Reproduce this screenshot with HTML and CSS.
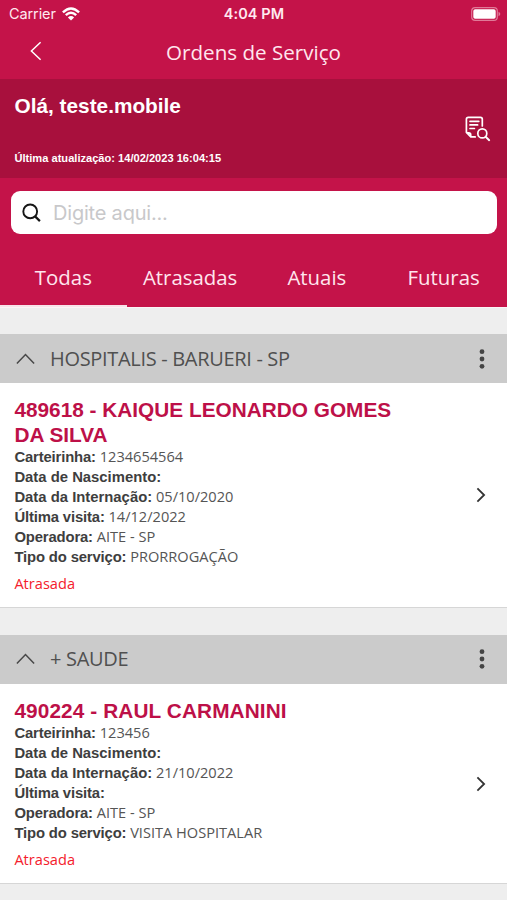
FILE: index.html
```html
<!DOCTYPE html>
<html lang="pt-BR">
<head>
<meta charset="utf-8">
<title>Ordens de Serviço</title>
<link rel="stylesheet" href="styles.css">
</head>
<body>
<div class="status">
  <div class="carrier"><span class="carrier-name">Carrier</span>
    <svg width="18" height="14" viewBox="0 0 18 14" fill="none" stroke="#fff" stroke-width="2.4"><path d="M.9 5.3Q9-2.5 17.1 5.3M3.8 8.2Q9 3.3 14.2 8.2"/><path d="M9 13.5 5.9 10.4Q9 7.7 12.1 10.4Z" fill="#fff" stroke="none"/></svg>
  </div>
  <span class="clock">4:04 PM</span>
  <svg class="battery" width="30" height="14" viewBox="0 0 30 14"><rect x=".7" y=".7" width="25.6" height="12.6" rx="3.4" fill="none" stroke="#e07a98" stroke-width="1.2"/><rect x="2.3" y="2.3" width="22.4" height="9.4" rx="1.8" fill="#fff"/><path d="M27.5 4.8Q29.3 5.6 29.3 7T27.5 9.2Z" fill="#e07a98"/></svg>
</div>
<header class="nav">
  <svg class="back" width="12" height="20" viewBox="0 0 12 20" fill="none" stroke="#fff" stroke-width="1.5"><path d="M10.6 1.2 1.4 10l9.2 8.8"/></svg>
  <h1>Ordens de Serviço</h1>
</header>
<section class="greeting">
  <div>
    <p class="hello">Olá, teste.mobile</p>
    <p class="updated">Última atualização: 14/02/2023 16:04:15</p>
  </div>
  <svg class="report" width="26" height="26" viewBox="0 0 26 26" fill="none" stroke="#fff" stroke-width="1.7" stroke-linecap="round" stroke-linejoin="round"><path d="M17.3 10V3.3Q17.3 1.4 15.4 1.4H3.3Q1.4 1.4 1.4 3.3V16.5L5.8 20.9H10.2M1.7 16.8H3.7Q5.7 16.8 5.7 18.8V20.7M5 5.3H13.8M5 8.9H12.6M5 12.5H9.4"/><circle cx="17.3" cy="17.4" r="4.5"/><path d="M20.6 20.7 24.2 24.2" stroke-width="1.9"/></svg>
</section>
<div class="search">
  <svg width="20" height="20" viewBox="0 0 20 20" fill="none" stroke="#161616" stroke-width="1.9"><circle cx="8.2" cy="8.4" r="6.9"/><path d="m13.1 13.4 4.8 4.7" stroke-width="2.2"/></svg>
  <span>Digite aqui...</span>
</div>
<nav class="tabs">
  <a class="tab active">Todas</a>
  <a class="tab">Atrasadas</a>
  <a class="tab">Atuais</a>
  <a class="tab">Futuras</a>
</nav>
<main>
  <section class="group">
    <div class="group-head">
      <svg width="19" height="12" viewBox="0 0 19 12" fill="none" stroke="#484848" stroke-width="1.5"><path d="m.9 10.5 8.6-9 8.6 9"/></svg>
      <h2>HOSPITALIS - BARUERI - SP</h2>
      <svg width="6" height="20" viewBox="0 0 6 20" fill="#444"><circle cx="3" cy="2.7" r="2.4"/><circle cx="3" cy="10" r="2.4"/><circle cx="3" cy="17.3" r="2.4"/></svg>
    </div>
    <article class="card">
      <div>
        <h3>489618 - KAIQUE LEONARDO GOMES<br>DA SILVA</h3>
        <p><b class="tight">Carteirinha:</b> 1234654564</p>
        <p><b>Data de Nascimento:</b></p>
        <p><b>Data da Internação:</b> 05/10/2020</p>
        <p><b class="tight">Última visita:</b> 14/12/2022</p>
        <p><b class="tight">Operadora:</b> AITE - SP</p>
        <p><b class="tight">Tipo do serviço:</b> PRORROGAÇÃO</p>
        <p class="late">Atrasada</p>
      </div>
      <svg width="10" height="16" viewBox="0 0 10 16" fill="none" stroke="#333" stroke-width="1.8"><path d="M1.4 1.4 8.1 8l-6.7 6.6"/></svg>
    </article>
  </section>
  <section class="group">
    <div class="group-head">
      <svg width="19" height="12" viewBox="0 0 19 12" fill="none" stroke="#484848" stroke-width="1.5"><path d="m.9 10.5 8.6-9 8.6 9"/></svg>
      <h2>+ SAUDE</h2>
      <svg width="6" height="20" viewBox="0 0 6 20" fill="#444"><circle cx="3" cy="2.7" r="2.4"/><circle cx="3" cy="10" r="2.4"/><circle cx="3" cy="17.3" r="2.4"/></svg>
    </div>
    <article class="card">
      <div>
        <h3 class="wide">490224 - RAUL CARMANINI</h3>
        <p><b class="tight">Carteirinha:</b> 123456</p>
        <p><b>Data de Nascimento:</b></p>
        <p><b>Data da Internação:</b> 21/10/2022</p>
        <p><b class="tight">Última visita:</b></p>
        <p><b class="tight">Operadora:</b> AITE - SP</p>
        <p><b class="tight">Tipo do serviço:</b> VISITA HOSPITALAR</p>
        <p class="late">Atrasada</p>
      </div>
      <svg width="10" height="16" viewBox="0 0 10 16" fill="none" stroke="#333" stroke-width="1.8"><path d="M1.4 1.4 8.1 8l-6.7 6.6"/></svg>
    </article>
  </section>
</main>
</body>
</html>
```
FILE: styles.css
```css
* { box-sizing: border-box; margin: 0; padding: 0; }
html, body { height: 900px; overflow: hidden; }
body {
  display: flex; flex-direction: column;
  background: #c41349; color: #444;
  font-family: "Open Sans", "Noto Sans", sans-serif;
}
body > * { flex: none; }
svg { display: block; flex: none; }
.status {
  height: 28px; padding: 0 6px 0 9px; color: #ffe9f0;
  display: grid; grid-template-columns: 1fr auto 1fr; align-items: center;
  font: 14.5px/28px Inter, sans-serif;
}
.carrier { display: flex; align-items: center; gap: 6px; }
.carrier-name { letter-spacing: -.1px; }
.clock { font-weight: 600; letter-spacing: .1px; margin-left: -2px; }
.battery { justify-self: end; margin-top: -1px; }
.nav {
  height: 51px; padding: 0 30px;
  display: grid; grid-template-columns: 12px 1fr 12px; align-items: center;
}
.back { margin-top: -6px; }
.nav h1 { text-align: center; font-size: 20.6px; font-weight: 400; line-height: 48px; color: #ffe6ee; height: 51px; }
.greeting {
  height: 99px; padding: 14px 16px 0 14.5px; background: #a8103d; color: #fff;
  display: flex; justify-content: space-between; align-items: flex-start;
  font-family: "Liberation Sans", Arial, sans-serif; font-weight: 700;
}
.hello { font-size: 20.8px; line-height: 26px; }
.updated { margin-top: 31px; font-size: 11.1px; line-height: 16px; }
.report { margin: 23px 0 0; }
.search {
  height: 43px; margin: 13px 10px 0 11px; padding: 0 11px; border-radius: 9px; background: #fff;
  display: flex; align-items: center; gap: 11px;
  color: #c8c8ca; font: 20px/44px Inter, sans-serif; letter-spacing: -.2px;
}
.tabs { height: 73px; display: grid; grid-template-columns: repeat(4, 1fr); }
.tab { padding-top: 29px; text-align: center; font-size: 20.4px; line-height: 28px; color: #ffe6ee; }
.tab.active { border-bottom: 2px solid #f7e3e9; }
main { flex: 1; background: #eee; border-top: 1px solid #fbf4f6; padding-top: 26px; }
.group { margin-bottom: 27px; }
.group-head {
  height: 49px; padding: 0 22px 0 16px; background: #cbcbcb;
  display: flex; align-items: center; gap: 15px;
}
.group-head h2 { flex: 1; font-size: 20px; font-weight: 400; line-height: 50px; letter-spacing: -.32px; color: #505050; }
.card {
  background: #fff; border-bottom: 1px solid #d6d6d6; padding: 14px 21px 13px 14.4px;
  display: flex; justify-content: space-between; align-items: center;
}
.card h3 { font: 700 20.8px/25px "Liberation Sans", Arial, sans-serif; color: #bd1048; }
.card .wide { letter-spacing: .1px; }
.card p { font-size: 14.6px; line-height: 19.9px; color: #555; white-space: nowrap; }
.card b { font: 700 14.85px/19px "Liberation Sans", Arial, sans-serif; color: #3e3e3e; }
.card .tight { letter-spacing: -.15px; }
.card .late { margin-top: 7px; color: #f4202c; }
```
